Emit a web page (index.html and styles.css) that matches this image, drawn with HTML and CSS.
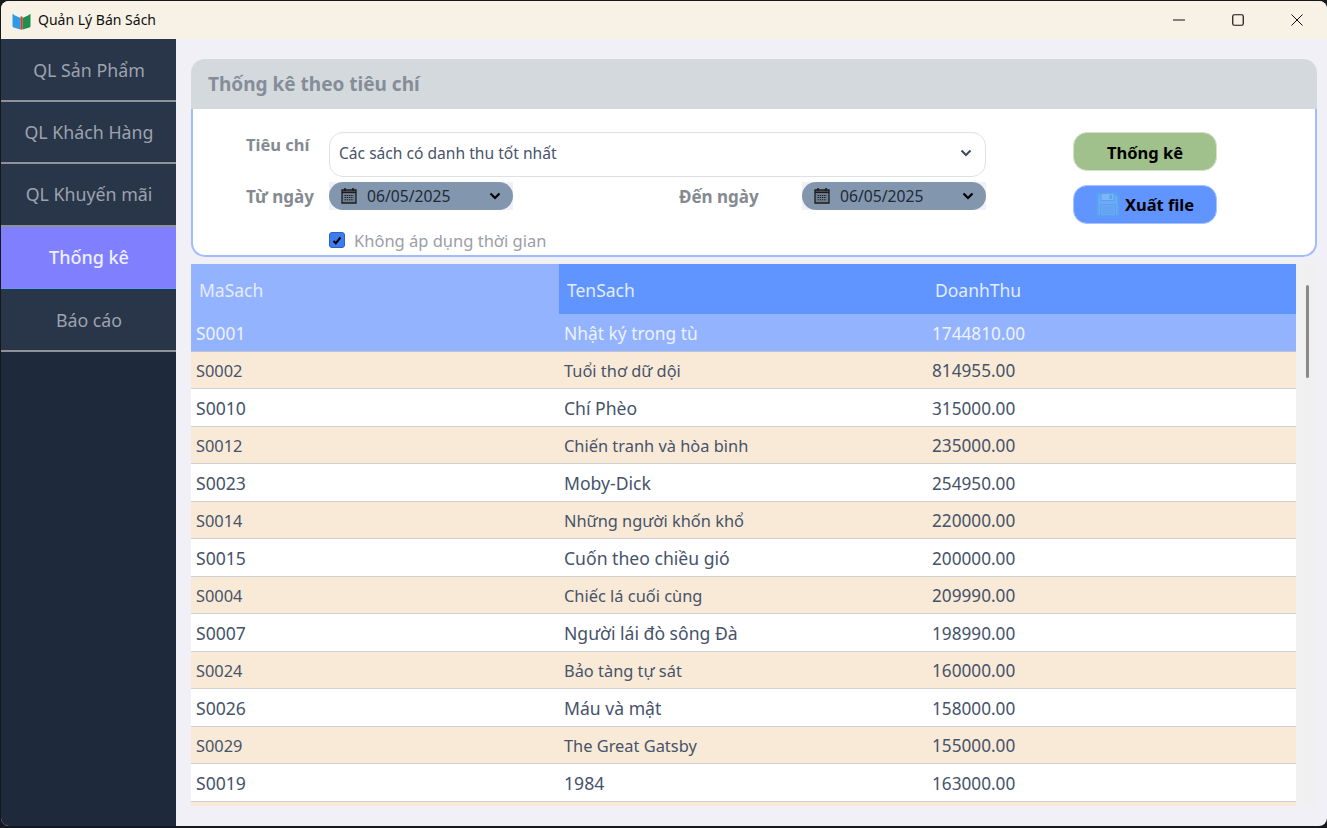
FILE: index.html
```html
<!DOCTYPE html>
<html>
<head>
    <title>Quản Lý Bán Sách</title>
    <link rel="stylesheet" href="styles.css">
</head>
<body>
<div class="window">

    <!-- title bar -->
    <header class="titlebar">
        <svg class="app-icon" width="19" height="19" viewBox="0 0 19 19">
            <path d="M0.5 3 L8.5 6 L8.5 18.5 L1.5 16.5 Q0.5 16 0.5 15 Z" fill="#2f9be6"/>
            <path d="M18.5 3 L10.5 6 L10.5 18.5 L17.5 16.5 Q18.5 16 18.5 15 Z" fill="#1f8f4e"/>
            <path d="M2 2.5 Q6 0.5 9.5 4.5 Q13 0.5 17 2.5 L17 4 L10.5 7 L8.5 7 L2 4 Z" fill="#f0f4ec"/>
            <rect x="8.5" y="5.5" width="2" height="13" fill="#d23a2a"/>
        </svg>
        <span class="app-title">Quản Lý Bán Sách</span>
        <div class="controls">
            <button class="ctl">
                <svg width="12" height="12" viewBox="0 0 12 12"><path d="M0 6H12" stroke="#111" stroke-width="1"/></svg>
            </button>
            <button class="ctl">
                <svg width="12" height="12" viewBox="0 0 12 12"><rect x="0.75" y="0.75" width="10.5" height="10.5" rx="1.5" fill="none" stroke="#111" stroke-width="1.2"/></svg>
            </button>
            <button class="ctl">
                <svg width="12" height="12" viewBox="0 0 12 12"><path d="M0.5 0.5L11.5 11.5M11.5 0.5L0.5 11.5" stroke="#111" stroke-width="1"/></svg>
            </button>
        </div>
    </header>

    <div class="app">
        <!-- menu -->
        <nav class="sidebar">
            <a class="menu-item">QL Sản Phẩm</a>
            <a class="menu-item">QL Khách Hàng</a>
            <a class="menu-item">QL Khuyến mãi</a>
            <a class="menu-item active">Thống kê</a>
            <a class="menu-item">Báo cáo</a>
        </nav>

        <main class="content">
            <section class="panel">
                <h2 class="panel-title">Thống kê theo tiêu chí</h2>
                <div class="panel-body">
                    <div class="filters">
                        <label class="label label-top">Tiêu chí</label>
                        <div class="select">
                            <span>Các sách có danh thu tốt nhất</span>
                            <svg width="12" height="8" viewBox="0 0 12 8"><path d="M1.5 1.5L6 6L10.5 1.5" fill="none" stroke="#3d4a5c" stroke-width="2"/></svg>
                        </div>

                        <label class="label">Từ ngày</label>
                        <div class="date-box">
                            <div class="date">
                                <svg class="cal" width="16" height="17" viewBox="0 0 16 17"><use href="#cal"/></svg>
                                <span>06/05/2025</span>
                                <svg class="caret" width="12" height="8" viewBox="0 0 12 8"><path d="M1.5 1.5L6 6L10.5 1.5" fill="none" stroke="#000" stroke-width="2.2"/></svg>
                            </div>
                        </div>
                        <label class="label label-end">Đến ngày</label>
                        <div class="date-box">
                            <div class="date">
                                <svg class="cal" width="16" height="17" viewBox="0 0 16 17"><use href="#cal"/></svg>
                                <span>06/05/2025</span>
                                <svg class="caret" width="12" height="8" viewBox="0 0 12 8"><path d="M1.5 1.5L6 6L10.5 1.5" fill="none" stroke="#000" stroke-width="2.2"/></svg>
                            </div>
                        </div>

                        <div class="check-row">
                            <span class="check">
                                <svg width="10" height="9" viewBox="0 0 10 9"><path d="M1.5 5L3.8 7.2L8.5 1.5" fill="none" stroke="#000" stroke-width="2"/></svg>
                            </span>
                            <span>Không áp dụng thời gian</span>
                        </div>
                    </div>

                    <div class="actions">
                        <button class="btn btn-green">Thống kê</button>
                        <button class="btn btn-blue">
                            <svg width="24" height="25" viewBox="0 0 24 25">
                                <path d="M1.5 1.5H19.5L22.5 4.5V23.5H1.5Z" fill="#6fa9f8" stroke="#58a2ee" stroke-width="2"/>
                                <rect x="5" y="1.5" width="13" height="7" fill="#7db4fa" stroke="#58a2ee" stroke-width="1"/>
                                <rect x="13.5" y="3" width="2.5" height="4" fill="#58a2ee"/>
                                <rect x="4.5" y="12.5" width="15" height="11" fill="#6aa6f6" stroke="#58a2ee" stroke-width="1"/>
                                <path d="M7 16H17M7 18.5H17M7 21H17" stroke="#58a2ee" stroke-width="1"/>
                            </svg>
                            Xuất file
                        </button>
                    </div>
                </div>
            </section>

            <!-- result table -->
            <section class="results">
                <div class="grid-wrap">
                    <div class="row head">
                        <div class="cell first-head">MaSach</div>
                        <div class="cell">TenSach</div>
                        <div class="cell">DoanhThu</div>
                    </div>
                    <div class="row selected"><div class="cell">S0001</div><div class="cell">Nhật ký trong tù</div><div class="cell">1744810.00</div></div>
                    <div class="row alt"><div class="cell">S0002</div><div class="cell">Tuổi thơ dữ dội</div><div class="cell">814955.00</div></div>
                    <div class="row"><div class="cell">S0010</div><div class="cell">Chí Phèo</div><div class="cell">315000.00</div></div>
                    <div class="row alt"><div class="cell">S0012</div><div class="cell">Chiến tranh và hòa bình</div><div class="cell">235000.00</div></div>
                    <div class="row"><div class="cell">S0023</div><div class="cell">Moby-Dick</div><div class="cell">254950.00</div></div>
                    <div class="row alt"><div class="cell">S0014</div><div class="cell">Những người khốn khổ</div><div class="cell">220000.00</div></div>
                    <div class="row"><div class="cell">S0015</div><div class="cell">Cuốn theo chiều gió</div><div class="cell">200000.00</div></div>
                    <div class="row alt"><div class="cell">S0004</div><div class="cell">Chiếc lá cuối cùng</div><div class="cell">209990.00</div></div>
                    <div class="row"><div class="cell">S0007</div><div class="cell">Người lái đò sông Đà</div><div class="cell">198990.00</div></div>
                    <div class="row alt"><div class="cell">S0024</div><div class="cell">Bảo tàng tự sát</div><div class="cell">160000.00</div></div>
                    <div class="row"><div class="cell">S0026</div><div class="cell">Máu và mật</div><div class="cell">158000.00</div></div>
                    <div class="row alt"><div class="cell">S0029</div><div class="cell">The Great Gatsby</div><div class="cell">155000.00</div></div>
                    <div class="row"><div class="cell">S0019</div><div class="cell">1984</div><div class="cell">163000.00</div></div>
                    <div class="row alt"></div>
                </div>
                <div class="scroll-track"><div class="scroll-thumb"></div></div>
            </section>
        </main>
    </div>
</div>

<!-- calendar icon used by both date pickers -->
<svg width="0" height="0" class="defs">
    <symbol id="cal" viewBox="0 0 16 17">
        <path d="M1 3H15V16H1Z" fill="#6f7f92" stroke="#1b1b1b" stroke-width="1.3"/>
        <rect x="1" y="4.5" width="14" height="1.6" fill="#1b1b1b"/>
        <path d="M4 1V4M12 1V4" stroke="#1b1b1b" stroke-width="1.6"/>
        <path d="M3.5 8.5H12.5M3.5 10.5H12.5M3.5 12.8H12.5" stroke="#1b1b1b" stroke-width="1" stroke-dasharray="1.4 0.8"/>
    </symbol>
</svg>
</body>
</html>
```

FILE: styles.css
```css
* { box-sizing: border-box; }
html, body { margin: 0; height: 100%; }
body { background: #15181d; font-family: "Noto Sans", "Open Sans", sans-serif; overflow: hidden; }
.defs { display: block; height: 0; }

.window { height: 825px; margin: 1px 0 0 1px; display: flex; flex-direction: column; border-radius: 8px; overflow: hidden; background: #f0f0f6; }

/* title bar */
.titlebar { height: 38px; flex: none; background: #f8f1e5; display: flex; align-items: center; padding-left: 11px; }
.app-icon { margin-right: 7px; }
.app-title { font-size: 14px; color: #111; padding-bottom: 2px; }
.controls { margin-left: auto; display: flex; padding-right: 1px; }
.ctl { width: 59px; height: 38px; border: 0; background: none; padding: 0; display: flex; align-items: center; justify-content: center; }

.app { flex: 1; display: flex; min-height: 0; }

/* menu */
.sidebar { width: 175px; flex: none; background: #1e293b; display: flex; flex-direction: column; }
.menu-item { height: 62.6px; display: flex; align-items: center; justify-content: center; background: #293548; color: #9ca3af; font-size: 17.8px; border-bottom: 2px solid #8d9299; padding-left: 1px; }
.menu-item:first-child { padding-top: 2px; }
.menu-item.active { background: #8080ff; color: #eef0ff; font-size: 18px; font-weight: 500; border-bottom: 1px solid #5a9bff; padding-bottom: 2px; }

.content { flex: 1; padding: 20px 10px 0 15px; min-width: 0; }

/* filter panel */
.panel { height: 198px; }
.panel-title { margin: 0; height: 50px; background: #d4d9dd; border-radius: 14px 14px 0 0; padding-left: 17px; font-size: 19px; font-weight: 700; line-height: 51px; color: #858d99; }
.panel-body { height: 148px; background: #fff; border: solid #a0bcff; border-width: 0 2px 2px 2px; border-radius: 0 0 14px 14px; display: flex; padding: 23px 0 0 53px; }

.filters { display: grid; grid-template-columns: 83px 184px 166px 123px 184px; grid-template-rows: 45px 28px 24px; row-gap: 5px; }
.label { font-size: 17px; font-weight: 700; color: #858a91; align-self: center; }
.label-top { align-self: start; font-size: 16.5px; line-height: 26px; }
.label-end { grid-column: 3 / 5; padding-left: 166px; }

.select { grid-column: 2 / 6; border: 1px solid #dde1e6; border-radius: 14px; display: flex; align-items: center; justify-content: space-between; padding: 0 13px 3px 9px; font-size: 15.6px; color: #46536a; }

.date-box { background: #f0f0f6; }
.date { height: 28px; background: #8296ae; border-radius: 14px; display: flex; align-items: center; padding: 0 12px; font-size: 15.7px; color: #1f2937; }
.date .cal { margin: 0 10px 2px 0; }
.date .caret { margin-left: auto; }

.check-row { grid-column: 2 / 6; align-self: start; height: 16px; margin-top: 17px; display: flex; align-items: center; gap: 9px; font-size: 16.5px; color: #9a9ea6; }
.check { width: 16px; height: 16px; border-radius: 3px; background: #3b7cf0; border: 1px solid #2c62c4; display: flex; align-items: center; justify-content: center; }

.actions { margin-left: 87px; display: flex; flex-direction: column; gap: 14px; }
.btn { width: 144px; height: 39px; border: 1px solid #d4e0ca; border-radius: 14px; font-family: inherit; font-size: 16.5px; font-weight: 700; color: #000; display: flex; align-items: center; justify-content: center; gap: 5px; padding: 0; }
.btn-green { background: #a0c08c; padding-top: 2px; }
.btn-blue { background: #6094ff; border-color: #a8c2ff; }

/* table */
.results { display: flex; margin-top: 7px; height: 542px; }
.grid-wrap { width: 1105px; flex: none; overflow: hidden; background: #fff; }
.row { display: grid; grid-template-columns: 368px 368px 1fr; height: 37.5px; border-bottom: 1px solid #d0d0d0; background: #fff; font-size: 17.6px; color: #46536a; align-items: center; }
.row .cell { padding: 2px 0 0 5px; white-space: nowrap; }
.row .cell:last-child { font-size: 17.2px; }
.row.alt { background: #f9ead7; font-size: 16.4px; }
.row.selected { background: #94b3ff; color: #edf2ff; border-bottom-color: #b8c4dc; font-size: 17.4px; }
.row.head { height: 50px; background: #6094ff; color: #e4ecff; font-size: 17.5px; border-bottom: 0; align-items: stretch; }
.row.head .cell { padding: 14px 0 0 8px; font-size: 17.5px; }
.row.head .first-head { background: #94b3ff; }

.scroll-track { width: 20px; margin-left: 1px; background: #f0f0f0; padding: 21px 0 0 9px; }
.scroll-thumb { width: 3px; height: 93px; background: #8a8a8a; border-radius: 2px; }
```
